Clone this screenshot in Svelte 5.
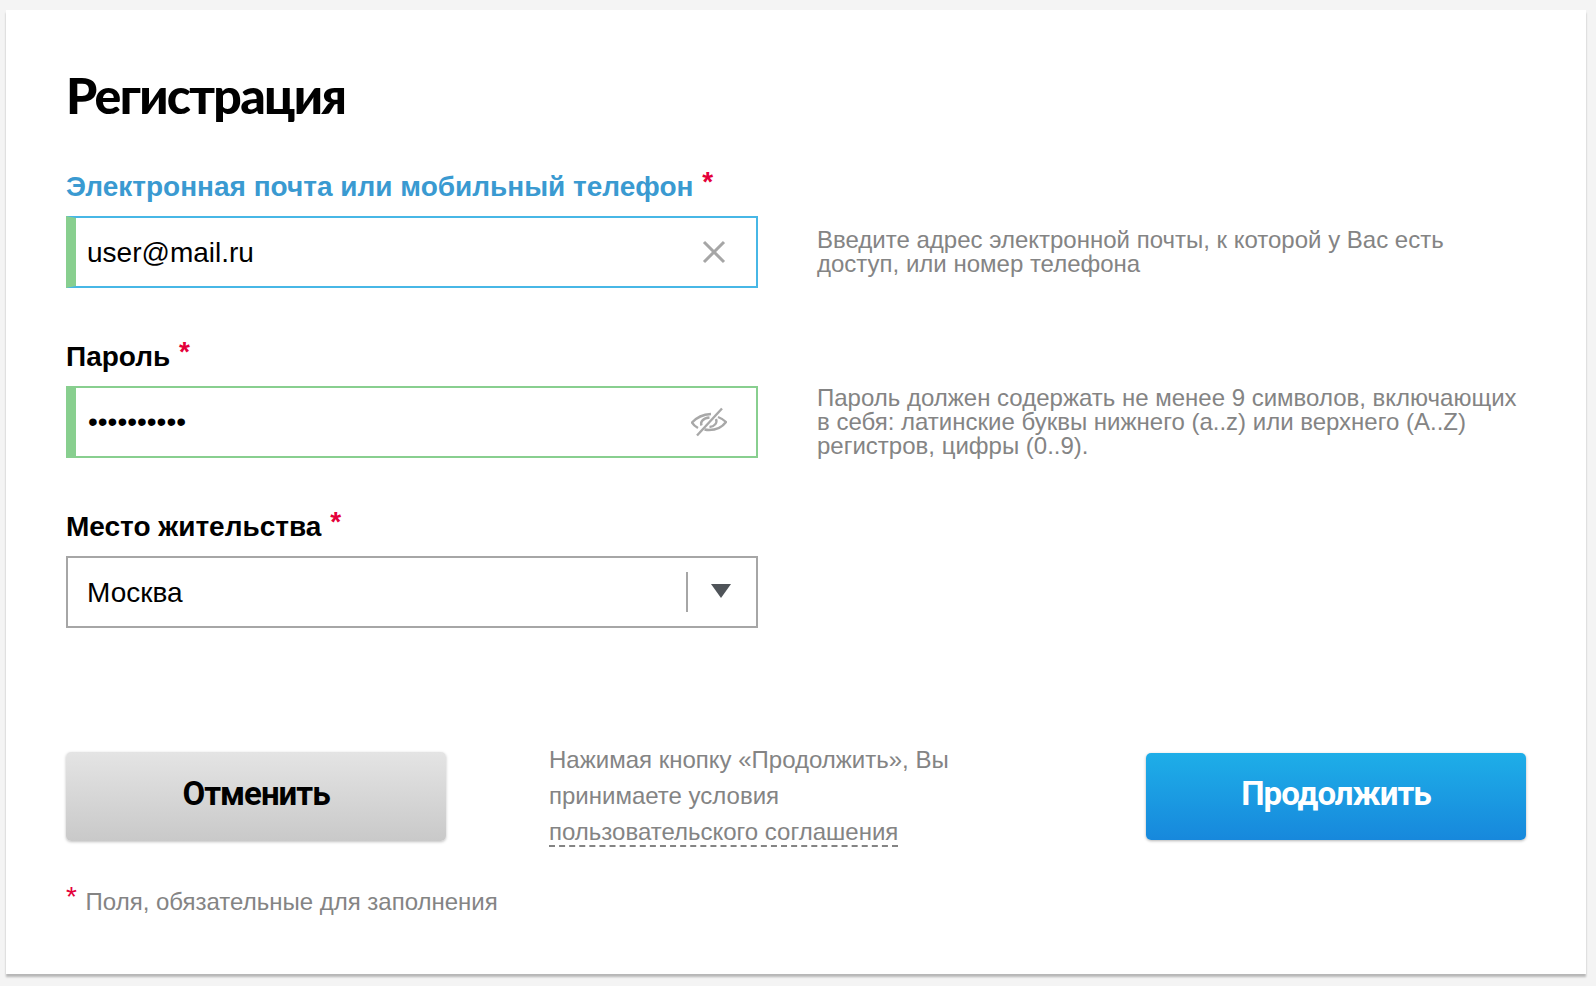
<script>
  const req = '*';
</script>

<div class="page">
  <main class="card">
    <h1>Регистрация</h1>

    <div class="row first">
      <div class="field">
        <div class="label focus">Электронная почта или мобильный телефон <span class="req">{req}</span></div>
        <div class="input focused valid">
          <span class="value">user@mail.ru</span>
          <svg class="x" width="24" height="24" viewBox="0 0 24 24"><path d="M2 2 22 22M22 2 2 22" stroke="#a6a6a6" stroke-width="3" fill="none"/></svg>
        </div>
      </div>
      <p class="hint h1">Введите адрес электронной почты, к которой у Вас есть доступ, или номер телефона</p>
    </div>

    <div class="row">
      <div class="field">
        <div class="label">Пароль <span class="req">{req}</span></div>
        <div class="input valid ok">
          <span class="dots">••••••••••</span>
          <svg class="eye" width="36" height="30" viewBox="0 0 36 30" fill="none" stroke="#a8a8a8" stroke-width="2.4"><path d="M7 21C4.500 19.500 2.500 18 1 15.500 5.500 10.500 12 7.500 20 7M27 10c3.500 1.300 6 3 8 5-4 5.500-10 8-17 8-1.500 0-3-.2-4.500-.5"/><path d="M10.500 18.500c-1.500-3.500 1.500-7.500 8-8M25 12c1.500 3.500-1 7.500-6.500 8"/><path d="M31 1.500 6 28.500"/></svg>
        </div>
      </div>
      <p class="hint h2">Пароль должен содержать не менее 9 символов, включающих в себя: латинские буквы нижнего (a..z) или верхнего (A..Z) регистров, цифры (0..9).</p>
    </div>

    <div class="row">
      <div class="field">
        <div class="label">Место жительства <span class="req">{req}</span></div>
        <div class="input select">
          <span class="value">Москва</span>
          <i class="sep"></i>
          <svg class="caret" width="20" height="14" viewBox="0 0 20 14"><path d="M0 0H20L10 14Z" fill="#4f5459"/></svg>
        </div>
      </div>
    </div>

    <div class="actions">
      <button class="btn cancel">Отменить</button>
      <p class="terms">Нажимая кнопку «Продолжить», Вы принимаете условия <span class="link">пользовательского соглашения</span></p>
      <button class="btn go">Продолжить</button>
    </div>

    <p class="note"><span class="req">{req}</span> Поля, обязательные для заполнения</p>
  </main>
</div>

<style>
  :global(body) { margin: 0; background: #f4f4f4; }
  .page { width: 1596px; height: 986px; padding: 10px 10px 0 6px; box-sizing: border-box; font-family: "Liberation Sans", Arial, sans-serif; }
  .card { width: 1580px; height: 964px; box-sizing: border-box; background: #fff; padding: 50px 60px 0 60px; box-shadow: 0 3px 2px rgba(0,0,0,.25); }
  h1 { margin: 0; font-family: Lato, Roboto, sans-serif; font-weight: 900; font-size: 50px; line-height: 70px; letter-spacing: -1.7px; color: #000; }
  .row { display: flex; gap: 59px; margin-top: 51px; }
  .row.first { margin-top: 39px; }
  .field { width: 692px; flex: none; }
  .label { font-weight: 700; font-size: 28px; line-height: 36px; color: #000; margin-bottom: 11px; white-space: nowrap; }
  .label.focus { color: #3a9ad1; }
  .req { color: #e4003a; margin-left: 1px; vertical-align: 5px; line-height: 0; }
  .input { height: 72px; box-sizing: border-box; border: 2px solid #a6a6a6; display: flex; align-items: center; padding: 0 20px; position: relative; background: #fff; }
  .valid { border-left-width: 10px; padding-left: 11px; }
  .select { padding-left: 19px; }
  .focused { border-color: #47b7e6; border-left-color: #88cf8f; }
  .ok { border-color: #88cf8f; }
  .value { font-size: 28px; color: #000; flex: 1; padding: 2px 0 0 0; }
  .dots { font-size: 28px; color: #000; flex: 1; padding-left: 1px; }
  .x { margin-right: 10px; }
  .eye { margin-right: 9px; }
  .sep { width: 2px; height: 40px; background: #a6a6a6; margin-right: 23px; }
  .caret { margin-right: 5px; margin-top: -3px; }
  .hint { margin: 0; font-size: 24px; line-height: 24px; color: #848484; width: 702px; }
  .h1 { padding-top: 59px; }
  .h2 { padding-top: 47px; }
  .actions { display: flex; align-items: flex-start; margin-top: 124px; }
  .btn { width: 380px; border: 0; border-radius: 5px; font-family: Roboto, sans-serif; font-weight: 700; font-size: 33px; letter-spacing: -1px; flex: none; padding: 0 0 6px; }
  .cancel { height: 89px; background: linear-gradient(#e4e4e4, #c9c9c9); color: #000; box-shadow: 0 1px 3px rgba(0,0,0,.25); }
  .go { height: 87px; margin-top: 1px; background: linear-gradient(#1eaee8, #1788dc); color: #fff; box-shadow: 0 1px 3px rgba(0,0,0,.3); }
  .terms { width: 420px; margin: -10px 177px 0 103px; font-size: 24px; line-height: 36px; color: #848484; flex: none; }
  .link { border-bottom: 2px dashed #848484; }
  .note { margin: 34px 0 0; font-size: 24px; line-height: 36px; color: #848484; }
  .note .req { margin-left: 0; margin-right: 2px; font-size: 28px; vertical-align: 4px; }
</style>
